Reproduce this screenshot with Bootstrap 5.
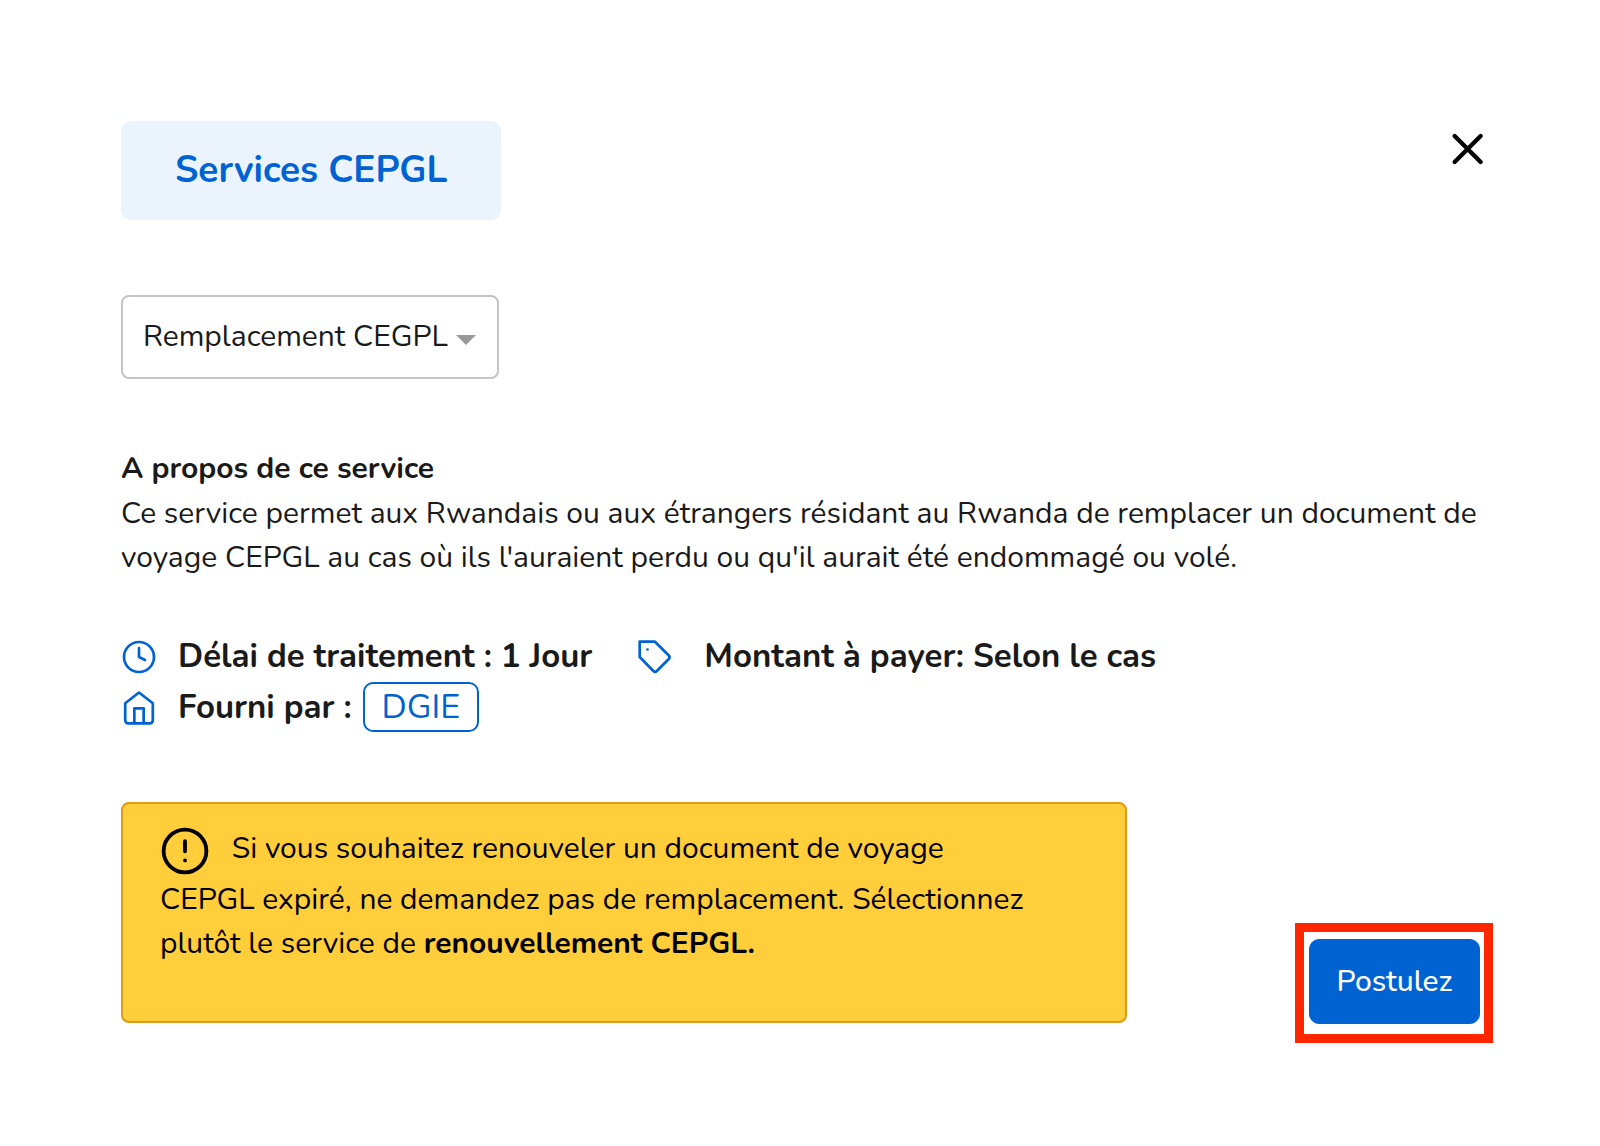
<!DOCTYPE html>
<html lang="fr">
<head>
<meta charset="utf-8">
<meta name="viewport" content="width=device-width, initial-scale=1">
<title>Services CEPGL</title>
<link href="https://cdn.jsdelivr.net/npm/bootstrap@5.3.0/dist/css/bootstrap.min.css" rel="stylesheet">
<style>
  :root { --brand: #0063d1; --ink: #1a1a1a; }
  body { font-family: Nunito, Lato, "Open Sans", sans-serif; font-size: 30px; line-height: 44px; color: var(--ink); background: #fff; }
  .service-page { padding: 121px 107px 80px 121px; }
  .service-title { background: #ebf3fd; color: var(--brand); font-size: 37px; line-height: 57px; font-weight: 700; padding: 21px 54px; border-radius: 10px; }
  .close-btn svg { width: 52px; height: 56px; }
  .service-select { width: 378px; height: 84px; margin-top: 75px; padding: 0 40px 0 20px; font-size: 30px; line-height: 44px; color: var(--ink); border: 2px solid #c4c4c4; border-radius: 8px;
    --bs-form-select-bg-img: url("data:image/svg+xml,%3Csvg xmlns='http://www.w3.org/2000/svg' viewBox='0 0 20 10'%3E%3Cpath d='M0 0h20L10 10z' fill='%23999'/%3E%3C/svg%3E");
    background-size: 20px 10px; background-position: right 21px top 38px; }
  .about { margin-top: 67px; }
  .about h2 { font-size: 30px; line-height: 46px; font-weight: 700; }
  .facts { margin-top: 51px; font-size: 33px; line-height: 51px; font-weight: 700; column-gap: 45px; }
  .facts svg { width: 36px; height: 36px; color: var(--brand); flex: none; }
  .fact { column-gap: 21px; }
  .fact-price { column-gap: 31px; }
  .fact-agency { column-gap: 11px; }
  .agency { font-size: 34px; font-weight: 400; color: var(--brand); border: 2px solid var(--brand); border-radius: 10px; padding: 0 17px; line-height: 46px; }
  .bottom-bar { margin-top: 69px; }
  .notice { flex: 0 1 1006px; min-height: 221px; margin-bottom: 20px; padding: 20px 90px 20px 37px; background: #ffce3a; border: 2px solid #e09a16; border-radius: 8px; color: #000; }
  .notice svg { width: 54px; height: 54px; margin: 0 12px 0 -2px; vertical-align: middle; }
  .highlight-frame { border: 9px solid #ff2600; padding: 7px 4px 10px 5px; }
  .apply-btn { --bs-btn-bg: var(--brand); --bs-btn-border-color: var(--brand); width: 171px; height: 85px; font-size: 30px; font-weight: 500; line-height: 44px; border-radius: 10px; }
</style>
<script src="https://cdn.jsdelivr.net/npm/bootstrap@5.3.0/dist/js/bootstrap.bundle.min.js"></script>
</head>
<body>
<main class="service-page">
  <header class="d-flex justify-content-between align-items-start">
    <h1 class="service-title mb-0">Services CEPGL</h1>
    <button type="button" class="close-btn btn p-0 border-0 text-black lh-1" aria-label="Fermer">
      <svg viewBox="0 0 24 24" fill="none" stroke="currentColor" stroke-width="2" stroke-linecap="round" aria-hidden="true"><path d="M18.300 6 6.300 18M6.300 6l12 12"/></svg>
    </button>
  </header>

  <select id="service" class="form-select service-select" aria-label="Service">
    <option selected>Remplacement CEGPL</option>
  </select>

  <section class="about">
    <h2 class="mb-0">A propos de ce service</h2>
    <p class="mb-0">Ce service permet aux Rwandais ou aux étrangers résidant au Rwanda de remplacer un document de voyage CEPGL au cas où ils l'auraient perdu ou qu'il aurait été endommagé ou volé.</p>
  </section>

  <section class="facts d-flex flex-wrap">
    <div class="fact d-flex align-items-center">
      <svg viewBox="0 0 24 24" fill="none" stroke="currentColor" stroke-width="1.800" stroke-linecap="round" stroke-linejoin="round" aria-hidden="true"><circle cx="12" cy="12" r="10"/><path d="M12 6v6l4 2"/></svg>
      <span>Délai de traitement : 1 Jour</span>
    </div>
    <div class="fact fact-price d-flex align-items-center">
      <svg viewBox="0 0 24 24" fill="none" stroke="currentColor" stroke-width="1.800" stroke-linecap="round" stroke-linejoin="round" aria-hidden="true"><path d="M12 1.800 21.200 11a1.700 1.700 0 0 1 0 2.300l-8 8a1.700 1.700 0 0 1-2.300 0L1.800 12V1.800z"/><path d="M7 7h.01"/></svg>
      <span>Montant à payer: Selon le cas</span>
    </div>
    <div class="fact d-flex align-items-center w-100">
      <svg viewBox="0 0 24 24" fill="none" stroke="currentColor" stroke-width="1.800" stroke-linecap="round" stroke-linejoin="round" aria-hidden="true"><path d="M2.800 8.800 12 1.700l9.200 7.100v11.400a2 2 0 0 1-2 2H4.800a2 2 0 0 1-2-2z"/><path d="M8.900 22V12.200h6.200V22"/></svg>
      <span class="fact-agency d-flex align-items-baseline">Fourni par : <span class="agency">DGIE</span></span>
    </div>
  </section>

  <div class="bottom-bar d-flex justify-content-between align-items-end">
    <div class="notice" role="note">
      <svg viewBox="0 0 24 24" fill="none" stroke="currentColor" stroke-width="1.700" stroke-linecap="round" aria-hidden="true"><circle cx="12" cy="12" r="9.500"/><path d="M12 7.600v4.500M12 16.200h.01"/></svg>
      Si vous souhaitez renouveler un document de voyage CEPGL expiré, ne demandez pas de remplacement. Sélectionnez plutôt le service de <strong>renouvellement CEPGL.</strong>
    </div>
    <div class="highlight-frame">
      <button type="button" class="apply-btn btn btn-primary d-block p-0">Postulez</button>
    </div>
  </div>
</main>
</body>
</html>
